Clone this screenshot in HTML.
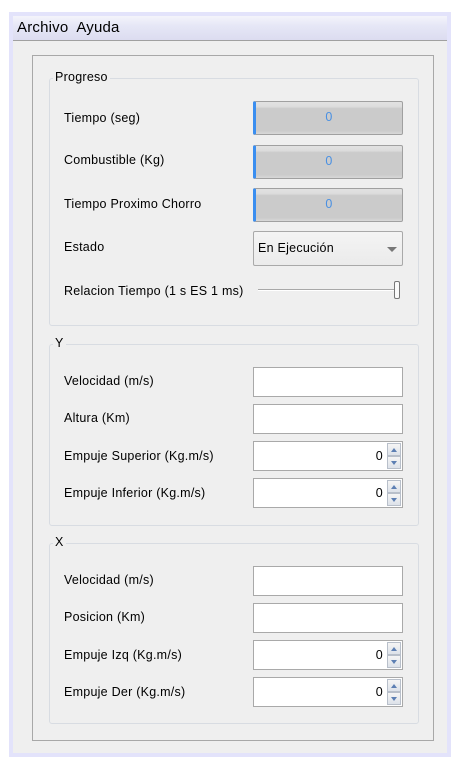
<!DOCTYPE html>
<html><head><meta charset="utf-8"><style>
*{margin:0;padding:0;box-sizing:border-box}
body{width:460px;height:769px;background:#fff;position:relative;overflow:hidden;font-family:"Liberation Sans","DejaVu Sans",sans-serif;font-size:12.5px;letter-spacing:0.25px;color:#000}
.a{position:absolute}
.outer{left:9px;top:12px;width:442px;height:745px;background:#e3e3fb}
.win{left:13px;top:16px;width:434px;height:737px;background:#efefef}
.menu{left:13px;top:16px;width:434px;height:25px;background:linear-gradient(#f4f4fb,#e6e7f6 40%,#dcdcf0);border-bottom:1px solid #a0a0a0;font-size:15px;letter-spacing:0.2px;padding:3px 0 0 4px}
.frame{left:32px;top:55px;width:402px;height:686px;border:1px solid #a8a8a8}
.grp{border:1px solid #d8dce2;border-radius:3px}
.gt{background:#efefef;padding:0 2px}
.lbl{left:64px}
.gray{left:253px;width:150px;height:34px;border:1px solid #a0a0a0;border-left:3px solid #3a8ef0;border-radius:2px;background:linear-gradient(#e2e2e2,#dcdcdc 15%,#cbcbcb 20%,#cbcbcb 90%,#d8d8d8);color:#4a90e2;text-align:center;line-height:31px}
.inp{left:253px;width:150px;height:30px;border:1px solid #a9a9a9;background:#fff}
.spin{text-align:right;padding-right:19px;line-height:28px}
.sb{position:absolute;right:1px;width:14px;height:13px;background:linear-gradient(#f5f5f5,#dde2ea);border:1px solid #b8bfca}
.sb.u{top:1px}.sb.d{top:14px}
.sb:after{content:"";position:absolute;left:3px;border-left:3.5px solid transparent;border-right:3.5px solid transparent}
.sb.u:after{top:4px;border-bottom:4px solid #5d7fb3}
.sb.d:after{top:4px;border-top:4px solid #5d7fb3}
</style></head><body>
<div class="a outer"></div>
<div class="a win"></div>
<div class="a menu">Archivo&nbsp; Ayuda</div>
<div class="a frame"></div>

<div class="a grp" style="left:49px;top:78px;width:370px;height:248px"></div>
<div class="a gt" style="left:53px;top:70px">Progreso</div>
<div class="a lbl" style="top:111px">Tiempo (seg)</div>
<div class="a gray" style="top:101px">0</div>
<div class="a lbl" style="top:153px">Combustible (Kg)</div>
<div class="a gray" style="top:145px">0</div>
<div class="a lbl" style="top:197px">Tiempo Proximo Chorro</div>
<div class="a gray" style="top:188px">0</div>
<div class="a lbl" style="top:240px">Estado</div>
<div class="a" style="left:253px;top:231px;width:150px;height:35px;border:1px solid #a9a9a9;border-radius:2px;background:linear-gradient(#f4f4f4,#ebebeb);padding:9px 0 0 4px">En Ejecución<div class="a" style="right:5px;top:15px;border-left:5px solid transparent;border-right:5px solid transparent;border-top:5px solid #777"></div></div>
<div class="a lbl" style="top:284px">Relacion Tiempo (1 s ES 1 ms)</div>
<div class="a" style="left:258px;top:289px;width:138px;height:2px;border-top:1px solid #a8a8a8;border-bottom:1px solid #fff"></div>
<div class="a" style="left:394px;top:281px;width:6px;height:18px;border:1px solid #777;border-radius:2px;background:#fafafa"></div>

<div class="a grp" style="left:49px;top:344px;width:370px;height:182px"></div>
<div class="a gt" style="left:53px;top:336px">Y</div>
<div class="a lbl" style="top:374px">Velocidad (m/s)</div>
<div class="a inp" style="top:367px"></div>
<div class="a lbl" style="top:411px">Altura (Km)</div>
<div class="a inp" style="top:404px"></div>
<div class="a lbl" style="top:449px">Empuje Superior (Kg.m/s)</div>
<div class="a inp spin" style="top:441px">0<div class="sb u"></div><div class="sb d"></div></div>
<div class="a lbl" style="top:486px">Empuje Inferior (Kg.m/s)</div>
<div class="a inp spin" style="top:478px">0<div class="sb u"></div><div class="sb d"></div></div>

<div class="a grp" style="left:49px;top:543px;width:370px;height:181px"></div>
<div class="a gt" style="left:53px;top:535px">X</div>
<div class="a lbl" style="top:573px">Velocidad (m/s)</div>
<div class="a inp" style="top:566px"></div>
<div class="a lbl" style="top:610px">Posicion (Km)</div>
<div class="a inp" style="top:603px"></div>
<div class="a lbl" style="top:648px">Empuje Izq (Kg.m/s)</div>
<div class="a inp spin" style="top:640px">0<div class="sb u"></div><div class="sb d"></div></div>
<div class="a lbl" style="top:685px">Empuje Der (Kg.m/s)</div>
<div class="a inp spin" style="top:677px">0<div class="sb u"></div><div class="sb d"></div></div>
</body></html>
